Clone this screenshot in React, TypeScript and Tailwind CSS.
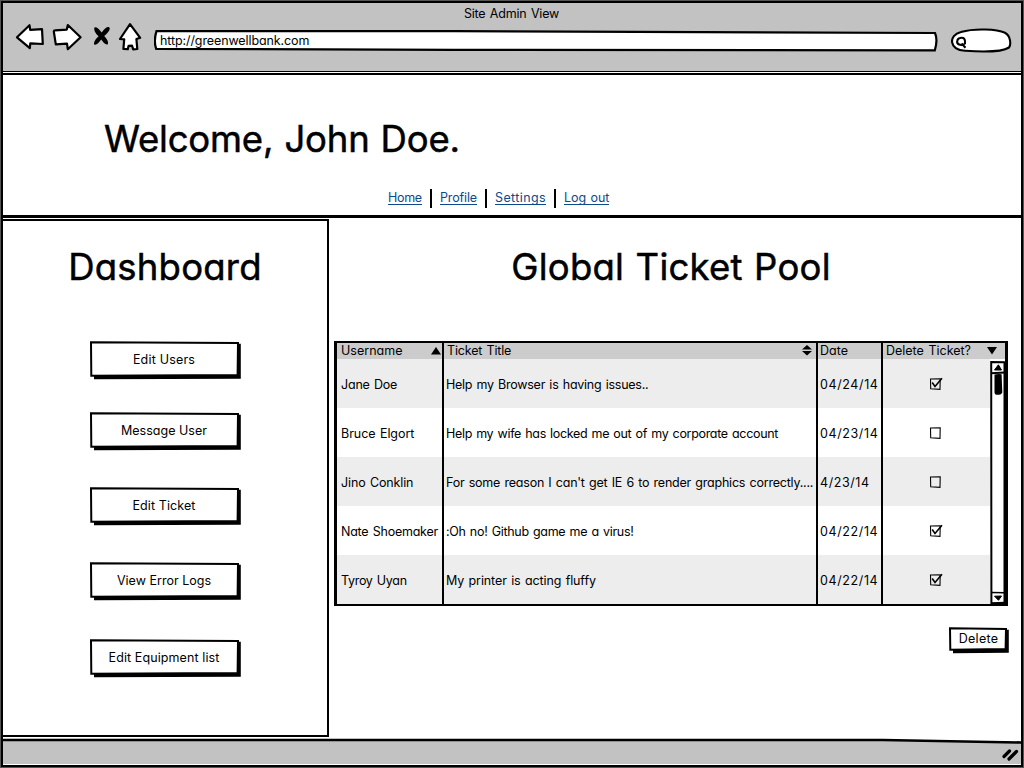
import type { ReactNode } from "react";

type Ticket = {
  user: string;
  userClass: string;
  title: string;
  titleClass: string;
  date: string;
  dateClass: string;
  checked: boolean;
};

const tickets: Ticket[] = [
  { user: "Jane Doe", userClass: "tracking-[-0.2px]", title: "Help my Browser is having issues..", titleClass: "tracking-[-0.25px]", date: "04/24/14", dateClass: "tracking-[0.61px]", checked: true },
  { user: "Bruce Elgort", userClass: "tracking-[-0.05px]", title: "Help my wife has locked me out of my corporate account", titleClass: "tracking-[-0.32px]", date: "04/23/14", dateClass: "tracking-[0.61px]", checked: false },
  { user: "Jino Conklin", userClass: "tracking-[-0.13px]", title: "For some reason I can't get IE 6 to render graphics correctly....", titleClass: "tracking-[-0.22px]", date: "4/23/14", dateClass: "tracking-[0.57px]", checked: false },
  { user: "Nate Shoemaker", userClass: "tracking-[-0.23px]", title: ":Oh no! Github game me a virus!", titleClass: "tracking-[-0.3px]", date: "04/22/14", dateClass: "tracking-[0.61px]", checked: true },
  { user: "Tyroy Uyan", userClass: "tracking-[-0.3px]", title: "My printer is acting fluffy", titleClass: "tracking-[-0.11px]", date: "04/22/14", dateClass: "tracking-[0.61px]", checked: true },
];

const actions = [
  { label: "Edit Users", textClass: "tracking-[0.19px]", gap: "mt-0" },
  { label: "Message User", textClass: "tracking-[0.02px]", gap: "mt-[33px]" },
  { label: "Edit Ticket", textClass: "tracking-[0.1px]", gap: "mt-[37px]" },
  { label: "View Error Logs", textClass: "tracking-[0.02px]", gap: "mt-[37px]" },
  { label: "Edit Equipment list", textClass: "tracking-[0.1px]", gap: "mt-[39px]" },
];

const links = [
  { label: "Home", className: "w-[34px] tracking-[-0.3px]" },
  { label: "Profile", className: "w-[37px] tracking-[-0.15px]" },
  { label: "Settings", className: "w-[51px] tracking-[0.4px]" },
  { label: "Log out", className: "w-[45px] tracking-[-0.05px]" },
];

function NavIcons() {
  return (
    <svg width="130" height="30" viewBox="14 22 130 30" fill="#fff" stroke="#000" strokeWidth="2.2" strokeLinejoin="round" strokeLinecap="round">
      <path d="M17 37.3 29.5 25.2 30.2 29.8 42 29.2 42.8 44 30.3 43.4 29.8 48.2Z" />
      <path d="M53.8 31.5Q53.8 30.3 55 30.3L66.8 29.6 67.8 25 80.6 37.3 67.8 49.2 67 43.6 55.8 44.3Z" />
      <path
        stroke="none"
        fill="#000"
        d="M94.2 29C94 25.8 97.6 26.6 101.7 32.6 105 27 109.6 25.4 109.8 28.6 109.6 31.4 107 33.6 104.2 36 107.4 39.4 109 42.8 107.6 44.4 105.8 45.4 103.2 42.6 101.2 39.6 98.6 43.2 95.8 46 94.2 44.4 93.4 42.4 95.8 38.6 98.6 36.2 95.8 33.8 94.3 31.4 94.2 29Z"
      />
      <path d="M130 24.2 140.2 37.8 136.4 39 137.3 49 133.2 49.4 132 45.6 128.6 45.8 127.8 49.2 123.4 49 124.2 39.4 120 39Z" />
    </svg>
  );
}

function SketchButton({ width, height, className, children }: { width: number; height: number; className: string; children: ReactNode }) {
  const shadow = `M4 3.2 ${width + 0.8} 2.8V${height - 0.2}L4 ${height + 0.2}Z`;
  const face = `M1 1.2 ${width - 2} 2 ${width - 2.4} ${height - 4} 1.3 ${height - 3.2}Z`;
  return (
    <button className={`relative flex items-center justify-center leading-none ${className}`}>
      <svg className="absolute inset-0 overflow-visible" width={width} height={height}>
        <path d={shadow} fill="#000" />
        <path d={face} fill="#fff" stroke="#000" strokeWidth="2" />
      </svg>
      <span className="relative">{children}</span>
    </button>
  );
}

function Checkbox({ checked }: { checked: boolean }) {
  return (
    <svg className="mr-[2px]" width="14" height="14" viewBox="0 0 14 14" fill="none" stroke="#000">
      <path d="M1.5 2 11.2 1.8 11 12.4 1.7 11.8Z" strokeWidth="1.1" />
      {checked && <path d="M3.2 5.5 6 9.4 13 1.2" strokeWidth="1.6" />}
    </svg>
  );
}

function TicketTable() {
  return (
    <div className="relative mt-[49px] h-[265px] w-[674px] border-x-[3px] border-y-2 border-black bg-white">
      <div className="flex h-full">
        <div className="grid flex-1 grid-cols-[105px_2px_372px_2px_63px_2px_1fr] grid-rows-[16px_49px_49px_49px_49px_49px]">
          <div className="flex items-center justify-between bg-[#ccc] pl-1 pr-px pt-px">
            <span className="tracking-[0.02px]">Username</span>
            <svg className="-mt-[2px]" width="10" height="8" viewBox="0 0 10 8"><path d="M0 7.6 5 0 10 7.6Z" /></svg>
          </div>
          <div className="row-span-6 bg-black" />
          <div className="flex items-center justify-between bg-[#ccc] pl-[3px] pr-1 pt-px">
            <span className="tracking-[-0.17px]">Ticket Title</span>
            <svg className="-mt-[2px]" width="10" height="11" viewBox="0 0 10 11"><path d="M0 4.4 5 0 10 4.4ZM0 6 5 10.4 10 6Z" /></svg>
          </div>
          <div className="row-span-6 bg-black" />
          <div className="flex items-center bg-[#ccc] pl-0.5 pt-px tracking-[0.03px]">Date</div>
          <div className="row-span-6 bg-black" />
          <div className="-mr-[15px] flex items-center justify-between bg-[#ccc] pl-[3px] pr-[8px] pt-px">
            <span>Delete Ticket?</span>
            <svg className="-mt-[2px]" width="10" height="8" viewBox="0 0 10 8"><path d="M0 0H10L5 7.6Z" /></svg>
          </div>
          {tickets.map((t, i) => {
            const bg = i % 2 === 0 ? "bg-[#ededed]" : "bg-white";
            return (
              <div key={t.user} className="contents whitespace-nowrap">
                <div className={`col-start-1 flex items-center pl-1 pt-[3px] ${bg} ${t.userClass}`}>{t.user}</div>
                <div className={`col-start-3 flex items-center pl-0.5 pt-[3px] ${bg} ${t.titleClass}`}>{t.title}</div>
                <div className={`col-start-5 flex items-center pl-[2px] pt-[3px] ${bg} ${t.dateClass}`}>{t.date}</div>
                <div className={`col-start-7 flex items-center justify-center ${bg}`}>
                  <Checkbox checked={t.checked} />
                </div>
              </div>
            );
          })}
        </div>
        <div className="mt-[18px] w-[15px]">
          <svg width="15" height="243" viewBox="0 0 15 243" fill="#fff" stroke="#000" strokeWidth="2">
            <path d="M1.2 1 14.5 1.2V243H1.4Z" strokeWidth="2" />
            <path d="M1 12.2 15 11.6" />
            <path d="M4.5 9 8.4 3.8 11.5 9Z" fill="#000" strokeWidth="1" />
            <path d="M4.5 13.5Q8 12.5 11.6 13.2L12.3 31.5Q11 34.5 8 33.7 4.6 34.5 4.5 31.5Z" fill="#000" stroke="none" />
            <path d="M1 231.5 15 231.8M1 242 15 241.5" strokeWidth="1.6" />
            <path d="M4.5 235.2 11.5 235 8.5 239.3Z" fill="#000" strokeWidth="1" />
          </svg>
        </div>
      </div>
    </div>
  );
}

export default function App() {
  return (
    <div className="flex h-[768px] w-[1024px] flex-col overflow-hidden border-[1px] border-[#555] bg-white font-['Inter',sans-serif] text-[12.5px] text-black [font-feature-settings:'cv11'] [word-spacing:1px]">
      <div className="flex min-h-0 flex-1 flex-col border-2 border-black">
        <header className="h-[69px] shrink-0 border-b-[1.5px] border-black bg-[#c2c2c2]">
          <h1 className="pr-[1px] pt-[1px] text-center leading-[19px] tracking-[-0.18px]">Site Admin View</h1>
          <div className="-mt-[1px] flex pl-[11px]">
            <NavIcons />
            <div className="relative ml-[10px] mt-[7px] flex h-[22px] w-[784px] items-center pl-[6px] pt-[2px]">
              <svg className="absolute inset-0" width="784" height="23" viewBox="0 0 784 23">
                <path d="M2.5 2.2 300 2.2 781 4Q784 11 780.8 21.3L300 20.8 2.2 19.8Q-.6 12 2.5 2.2Z" fill="#fff" stroke="#000" strokeWidth="2.2" />
              </svg>
              <span className="relative tracking-[-0.1px]">http://greenwellbank.com</span>
            </div>
            <svg className="ml-[13px] mt-[6px]" width="62" height="26" viewBox="0 0 62 26" fill="none" stroke="#000" strokeWidth="2.1">
              <path d="M14 22.8C-2 22.3-3 7 10 4 24 0 46 1.2 54 4.8 60 8 60 17 58 19.5 50 24.8 30 23.9 14 22.8Z" fill="#fff" />
              <path d="M9 10C13 9 14.5 11 14 15.5 9.5 18.5 5.5 16 6.2 13 6.6 11 7.5 10.3 9 10ZM10.5 15.5 14.5 19.8" />
            </svg>
          </div>
        </header>

        <section className="mt-[1px] flex h-[145px] shrink-0 flex-col border-y-2 border-b-[3px] border-black">
          <h2 className="ml-[101px] mt-[39px] h-[50px] whitespace-nowrap text-[36.5px] leading-[50px] tracking-[-0.18px] [-webkit-text-stroke:0.5px_#000]">Welcome, John Doe.</h2>
          <nav className="ml-[385px] mt-[25px] flex h-[20px] leading-[18px] text-[#0c4a8b]">
            {links.map((l, i) => (
              <div key={l.label} className="flex">
                {i > 0 && <span className="ml-2 mr-2 h-[19px] w-[2px] bg-black" />}
                <a href="#" className={`h-[16px] whitespace-nowrap border-b border-[#0c4a8b] no-underline ${l.className}`}>{l.label}</a>
              </div>
            ))}
          </nav>
        </section>

        <main className="flex h-[521px] shrink-0">
          <aside className="mt-[1px] flex h-[518px] w-[326px] shrink-0 flex-col items-center border-y-2 border-r-[2.5px] border-black">
            <h2 className="mt-[21px] h-[50px] whitespace-nowrap text-[36.5px] leading-[50px] tracking-[0.2px] [-webkit-text-stroke:0.5px_#000]">Dashboard</h2>
            <div className="mt-[49px] flex flex-col">
              {actions.map((a) => (
                <SketchButton key={a.label} width={150} height={38} className={`h-[38px] w-[150px] pr-[2px] ${a.gap} ${a.textClass}`}>
                  {a.label}
                </SketchButton>
              ))}
            </div>
          </aside>
          <div className="ml-[5px] flex flex-1 flex-col">
            <h2 className="mt-[24px] h-[50px] whitespace-nowrap pr-[13px] text-center text-[36.5px] leading-[50px] tracking-[0.22px] [-webkit-text-stroke:0.5px_#000]">Global Ticket Pool</h2>
            <TicketTable />
            <SketchButton width={59} height={26} className="ml-[615px] mt-[21px] h-[26px] w-[59px] pb-px tracking-[0.3px]">Delete</SketchButton>
          </div>
        </main>

        <footer className="relative -mt-px flex flex-1 items-center justify-end">
          <svg className="absolute inset-0" width="1018" height="26" viewBox="0 0 1018 26">
            <path d="M-2 2H880L1020 4.5V28H-2Z" fill="#c2c2c2" stroke="#000" strokeWidth="2.5" />
          </svg>
          <svg className="relative mr-[2px] mt-[4px]" width="18" height="16" viewBox="0 0 18 16" stroke="#000" strokeWidth="3.2" strokeLinecap="round">
            <path d="M3 10.5 8.5 5M8 13 15.5 5.5" />
          </svg>
        </footer>
      </div>
    </div>
  );
}
